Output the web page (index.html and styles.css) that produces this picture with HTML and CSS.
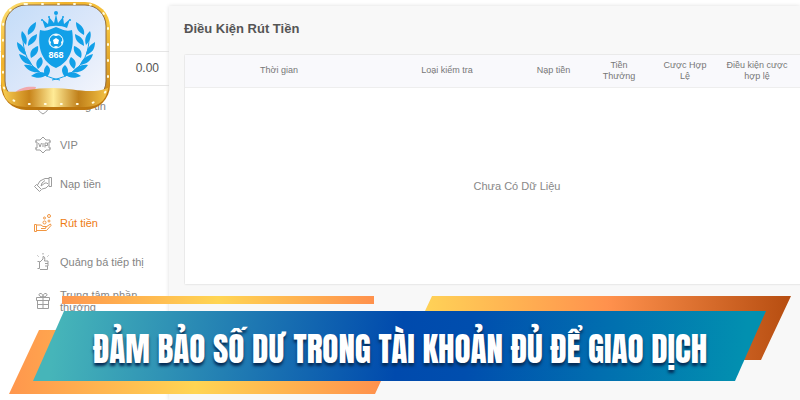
FILE: index.html
```html
<!DOCTYPE html>
<html lang="vi">
  <head>
    <meta charset="UTF-8">
    <meta name="viewport" content="width=device-width, initial-scale=1.0">
    <title>Điều Kiện Rút Tiền</title>
    <link rel="stylesheet" href="styles.css">
  </head>
  <body>
    <div class="page">
      <aside class="sidebar">
        <div class="balance">0.00</div>
        <nav class="menu">
          <a class="menu-item" href="#">
            <svg class="icon" viewBox="0 0 18 18"><path d="M9 1l6 2v6c0 4-3 6-6 8-3-2-6-4-6-8V3z"/></svg>
            <span>Thông tin</span>
          </a>
          <a class="menu-item" href="#">
            <svg class="icon" viewBox="0 0 18 18">
              <path d="M2 6V4h4l3-3 3 3h4v2M2 12v2h4l3 3 3-3h4v-2M1 6h2v6H1M17 6h-2v6h2"/>
              <path d="M4.500 7l1.500 4 1.500-4M9 7v4M11 11.500V7h2.500v2.500H11"/>
            </svg>
            <span>VIP</span>
          </a>
          <a class="menu-item" href="#">
            <svg class="icon" viewBox="0 0 18 18">
              <path d="M.5 11.500l2-2 5 5-2 2zM3.500 10L6 6l5-2.500h4M8 14l4-1 2.500-2.500H15M11 5.500L8 8l-1 3 4-3h2l1 1M15 2.500h2.500v9H15z"/>
            </svg>
            <span>Nạp tiền</span>
          </a>
          <a class="menu-item active" href="#">
            <svg class="icon" viewBox="0 0 18 18">
              <path d="M.5 10.500h2v7h-2zM3 11h4l2 1.500h3l-.5 2H7M12 13l4.500-3 .5 1.500-4.500 5H3"/>
              <circle cx="10.500" cy="4" r="1"/><circle cx="15" cy="2" r="1.500"/><circle cx="10.500" cy="8.500" r="1.500"/><circle cx="15" cy="7" r="1"/>
            </svg>
            <span>Rút tiền</span>
          </a>
          <a class="menu-item" href="#">
            <svg class="icon" viewBox="0 0 18 18">
              <path d="M3.500 8.500h2v7h-2M6 9l3-3V3.500c2 0 2 2 1.500 4.500H14v2.500h-3M14 10.500V13h-3M13.500 13v3.500H6M9 1.500V0M4.500 3.500l-1-1M13.500 3.500l1-1"/>
            </svg>
            <span>Quảng bá tiếp thị</span>
          </a>
          <a class="menu-item" href="#">
            <svg class="icon" viewBox="0 0 18 18">
              <path d="M2.500 5.500h13v3h-13zM3.500 8.500v8h11v-8M9 5.500v11M3.500 12.500h11M9 5C5 5 4 2 6 1.500 8 1 9 3 9 5c0-2 1-4 3-3.500C14 2 13 5 9 5"/>
            </svg>
            <span>Trung tâm phần thưởng</span>
          </a>
        </nav>
      </aside>

      <main class="content">
        <h1 class="title">Điều Kiện Rút Tiền</h1>
        <div class="table-wrap">
          <table class="conditions">
            <colgroup>
              <col class="col-time"><col class="col-type"><col class="col-deposit">
              <col class="col-bonus"><col class="col-bet"><col class="col-terms"><col class="col-status">
            </colgroup>
            <thead>
              <tr>
                <th>Thời gian</th>
                <th>Loại kiểm tra</th>
                <th>Nạp tiền</th>
                <th>Tiền Thưởng</th>
                <th>Cược Hợp Lệ</th>
                <th>Điều kiện cược hợp lệ</th>
                <td></td>
              </tr>
            </thead>
            <tbody>
              <tr><td class="empty" colspan="7">Chưa Có Dữ Liệu</td></tr>
            </tbody>
          </table>
        </div>
      </main>
    </div>

    <!-- app badge -->
    <svg class="logo" viewBox="0 0 112 112" role="img" aria-label="868">
      <defs>
        <linearGradient id="sky" x1="0" y1="0" x2="1" y2="1">
          <stop offset="0" stop-color="#c3dcf8"/><stop offset=".5" stop-color="#dbe7fa"/><stop offset="1" stop-color="#f6f7fc"/>
        </linearGradient>
        <linearGradient id="frame" x1="0" y1="0" x2="1" y2="1">
          <stop offset="0" stop-color="#ffe477"/><stop offset=".3" stop-color="#f0b22c"/><stop offset=".6" stop-color="#f8c840"/><stop offset="1" stop-color="#c47b10"/>
        </linearGradient>
        <linearGradient id="wave">
          <stop offset="0" stop-color="#f7cd52"/><stop offset=".25" stop-color="#c8841a"/><stop offset=".48" stop-color="#ffeb96"/><stop offset=".72" stop-color="#c0801a"/><stop offset="1" stop-color="#f5c445"/>
        </linearGradient>
        <g id="branch">
          <path d="M60 80C38 76 23 62 23 38" fill="none" stroke="#12a0e8"/>
          <path d="M36 22c-7 4-9 8-8 13 6-3 8-7 8-13zM22 31c-2 5 0 10 4 14 2-6 0-10-4-14zM37 34c-7 3-9 6-9 12 6-3 9-6 9-12zM17 42c0 7 3 11 9 13-1-7-4-10-9-13zM38 46c-6 2-9 6-7 12 6-3 8-7 7-12zM19 54c2 7 6 10 13 11-2-6-6-9-13-11zM41 57c-5 3-6 7-3 12 5-4 6-8 3-12zM24 65c4 6 9 8 16 7-4-5-9-8-16-7zM47 65c-4 4-4 8 0 12 4-5 4-9 0-12zM31 76c7 3 12 2 17-2-7-3-12-2-17 2z"/>
        </g>
      </defs>
      <rect x="1" y="6" width="109" height="104" rx="25" fill="#bd770e"/>
      <rect x="1" y="2" width="109" height="104" rx="25" fill="url(#frame)"/>
      <rect x="5" y="5" width="101" height="97" rx="21" fill="url(#sky)" stroke="#8e6b40"/>
      <path d="M14 93c7-6 14-7 22-6l-2 7z" fill="#f1a8ac"/>
      <path d="M3 90c12 5 22-2 50-2 22 0 36 7 55 0-2 14-10 19-25 19H29C13 107 5 103 3 90z" fill="url(#wave)"/>
      <rect class="studs" x="3" y="4" width="105" height="100" rx="23"/>
      <g fill="#12a0e8">
        <use href="#branch"/>
        <use href="#branch" transform="matrix(-1 0 0 1 112 0)"/>
        <path d="M56 27l5 2c4 2 8 2 11 1 3 18-2 32-16 38-14-6-19-20-16-38 4 1 7 1 11-1z"/>
        <path d="M42 19l6 5 1-7 5 6 2-9 2 9 5-6 1 7 6-5-3 9c-6-3-16-3-22 0z"/>
        <circle cx="56" cy="13" r="2"/><circle cx="49" cy="17" r="1"/><circle cx="63" cy="17" r="1"/><circle cx="42" cy="20" r="1"/><circle cx="70" cy="20" r="1"/>
      </g>
      <circle cx="56" cy="41" r="7" fill="none" stroke="#fff"/>
      <path d="M56 38l3 2-1 4h-4l-1-4zM52 35l4 1 4-1-4-1zM49 40l2 2-1 4M63 40l-2 2 1 4M53 47l3-1 3 1-3 1z" fill="#fff"/>
      <text class="logo-text" x="56" y="58">868</text>
    </svg>

    <div class="banner">
      <svg class="banner-shape" viewBox="0 0 800 100" preserveAspectRatio="none" aria-hidden="true">
        <defs>
          <linearGradient id="gold">
            <stop offset="0" stop-color="#ff964d"/><stop offset=".5" stop-color="#ffd553"/><stop offset="1" stop-color="#ff914d"/>
          </linearGradient>
          <linearGradient id="copper">
            <stop offset="0" stop-color="#ffd257"/><stop offset=".5" stop-color="#ff914d"/><stop offset="1" stop-color="#b64d10"/>
          </linearGradient>
          <linearGradient id="blue" gradientUnits="userSpaceOnUse" x1="60" y1="0" x2="740" y2="90">
            <stop offset="0" stop-color="#46b5b9"/><stop offset=".5" stop-color="#004aad"/><stop offset=".6" stop-color="#004eae"/><stop offset="1" stop-color="#0290b0"/>
          </linearGradient>
        </defs>
        <path d="M62 1h312v8H62z" fill="url(#gold)"/>
        <path d="M39 35h60v51h282l-6 13H9z" fill="url(#gold)"/>
        <path d="M432 1h359l-30 64h-60V16H425z" fill="url(#copper)"/>
        <path d="M64 16h702l-31 70H33z" fill="url(#blue)"/>
      </svg>
      <strong class="banner-text">ĐẢM BẢO SỐ DƯ TRONG TÀI KHOẢN ĐỦ ĐỂ GIAO DỊCH</strong>
    </div>
  </body>
</html>
```

FILE: styles.css
```css
* {
  box-sizing: border-box;
}

body {
  margin: 0;
  background: #fff;
  color: #777;
  font-family: "Liberation Sans", Arial, sans-serif;
  font-size: 11px;
  overflow: hidden;
}

.page {
  display: flex;
  min-height: 100vh;
}

/* left menu */
.sidebar {
  flex: 0 0 169px;
  padding-top: 51px;
}

.balance {
  padding: 0 10px;
  border-top: 1px solid #e5e5e5;
  border-bottom: 1px solid #e5e5e5;
  font-size: 12px;
  line-height: 33px;
  text-align: right;
  color: #555;
}

.menu-item {
  display: flex;
  align-items: center;
  gap: 8px;
  height: 39px;
  padding: 0 24px 0 34px;
  line-height: 12px;
  color: #858585;
  text-decoration: none;
}

.menu-item.active {
  color: #ee7c12;
}

.icon {
  flex: none;
  width: 18px;
  height: 18px;
  fill: none;
  stroke: currentColor;
  stroke-width: 1;
  opacity: 0.8;
}

/* right side */
.content {
  flex: 1;
  min-width: 0;
  margin-top: 6px;
  padding: 15px 0 0 15px;
  background: #f8f8f8;
  box-shadow: 0 0 4px #ddd;
}

.title {
  margin: 0 0 17px;
  font-size: 13px;
  line-height: 16px;
  color: #555;
}

.table-wrap {
  overflow: hidden;
  padding: 1px 0 4px 1px;
}

.conditions {
  width: 100%;
  min-width: 664px;
  table-layout: fixed;
  border-collapse: collapse;
  background: #fff;
  box-shadow: 0 0 2px #ccc;
}

.conditions thead {
  background: #f9f9fc;
  border-bottom: 1px solid #eee;
}

.conditions th {
  height: 32px;
  padding: 0 8px;
  font-size: 9px;
  font-weight: normal;
  line-height: 11px;
}

.col-time { width: 188px; }
.col-type { width: 148px; }
.col-deposit { width: 65px; }
.col-bonus,
.col-bet { width: 66px; }
.col-terms { width: 78px; }

.conditions .empty {
  height: 197px;
  text-align: center;
  color: #888;
}

/* badge and banner lie over the page */
.logo {
  position: absolute;
  top: 0;
  left: 0;
  width: 112px;
  height: 112px;
}

.studs {
  fill: none;
  stroke: #fffbe0;
  stroke-width: 2;
  stroke-linecap: round;
  stroke-dasharray: 1 15;
}

.logo-text {
  fill: #fff;
  font-size: 9px;
  font-weight: bold;
  text-anchor: middle;
}

.banner {
  position: absolute;
  bottom: 5px;
  left: 0;
  display: grid;
  width: 100%;
  height: 100px;
}

.banner-shape,
.banner-text {
  grid-area: 1 / 1;
  width: 100%;
  height: 100px;
}

.banner-text {
  padding-top: 4px;
  font-family: Anton, "Roboto Condensed", "Open Sans Condensed", sans-serif;
  font-size: 33px;
  font-weight: 400;
  line-height: 100px;
  text-align: center;
  white-space: nowrap;
  color: #fff;
  text-shadow: 0 3px 3px #052b55;
}
```
